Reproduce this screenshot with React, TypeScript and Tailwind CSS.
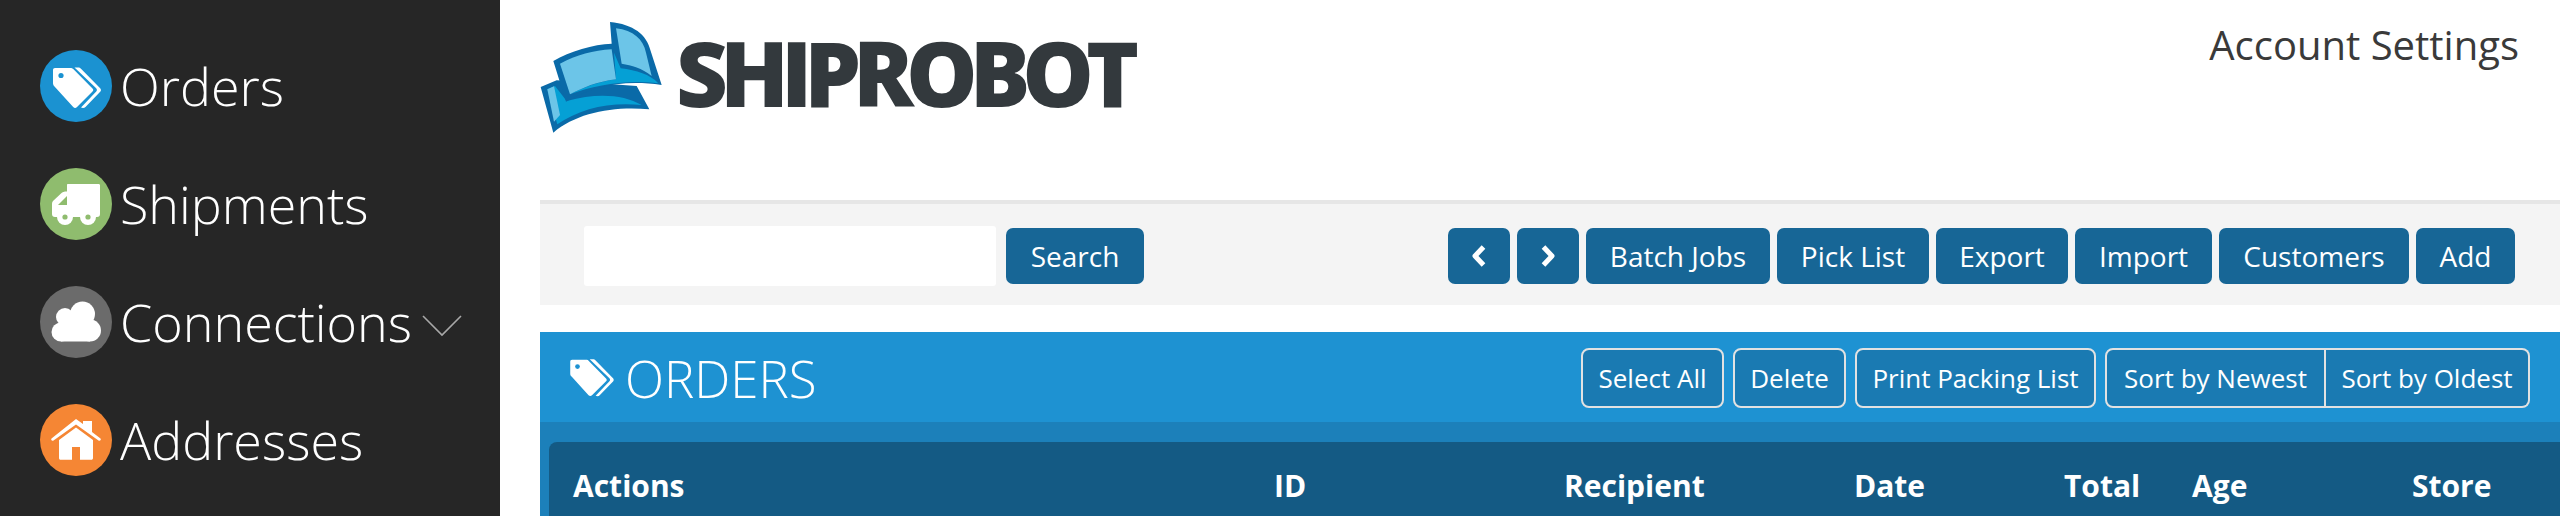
import React from 'react';

const font = { fontFamily: '"Open Sans", "Noto Sans", sans-serif' };

function TagIcon({ className, color }: { className: string; color: string }) {
  return (
    <svg className={className} viewBox="11 15 50 43" fill="none">
      <path
        d="M14 17H29C31 17 32 17.5 33 18.8L51.5 37.5C52.5 38.6 52.5 39.6 51.5 40.6L36 56C34.8 57.2 33.4 57.2 32.2 56L13.5 35.5C12.4 34.3 12 33.4 12 32V19C12 17.8 12.8 17 14 17Z"
        fill="#fff"
      />
      <circle cx="20" cy="24.5" r="2.6" fill={color} />
      <path
        d="M33.5 16.5H37C38.4 16.5 39.2 16.9 40 17.8L59.2 37.2C60.2 38.4 60.2 39.6 59.2 40.8L44.5 56C43.4 57.2 41.6 57.4 40 56.6L55 40.8C56.2 39.6 56.2 38.4 55.2 37.2Z"
        fill="#fff"
      />
    </svg>
  );
}

function TruckIcon() {
  return (
    <svg className="w-[72px] h-[72px]" viewBox="0 0 72 72">
      <path
        d="M28 16H58.5C59.6 16 60 16.6 60 17.6V46C60 48 59 49 57 49H15C13 49 12 48 12 46V36C12 34.5 12.5 33.5 13.5 32.5L21 25.5C22.5 24 24 23.5 27 23.5V17C27 16.4 27.4 16 28 16Z"
        fill="#fff"
      />
      <path d="M18 37L27 28V37Z" fill="#8fbc6e" />
      <circle cx="25" cy="49" r="8" fill="#fff" />
      <circle cx="48" cy="49" r="8" fill="#fff" />
      <circle cx="25" cy="49" r="2.6" fill="#8fbc6e" />
      <circle cx="48" cy="49" r="2.6" fill="#8fbc6e" />
    </svg>
  );
}

function CloudIcon() {
  return (
    <svg className="w-[72px] h-[72px]" viewBox="0 0 72 72" fill="#fff">
      <circle cx="42.5" cy="28" r="12.5" />
      <circle cx="25" cy="31" r="9" />
      <circle cx="21" cy="46" r="9.5" />
      <circle cx="50" cy="44.5" r="11" />
      <rect x="21" y="30" width="29" height="25.5" />
    </svg>
  );
}

function HouseIcon() {
  return (
    <svg className="w-[72px] h-[72px]" viewBox="0 0 72 72" fill="#fff">
      <path d="M36 15L43 20V17H52V28L60.5 34.5C61.5 35.6 60 37.5 58.5 36.5L36 20.5L13.5 36.5C12 37.5 10.5 35.6 11.5 34.5Z" />
      <path d="M36 23.5L53 36V54C53 55.2 52.4 55.8 51.2 55.8H40V43H32V55.8H20.8C19.6 55.8 19 55.2 19 54V36Z" />
    </svg>
  );
}

function Logo() {
  return (
    <svg className="w-[140px] h-[130px] shrink-0" viewBox="0 0 420 390">
      <path d="M32 228L80 208L320 225L358 295C250 285 140 305 70 365Z" fill="#0a6aa8" />
      <path d="M52 235L75 225L110 270C200 245 280 250 335 282C240 272 150 292 82 340Z" fill="#05a0d5" />
      <path d="M52 235L72 226L90 312L72 332Z" fill="#6cc5e8" />
      <path d="M70 150C120 120 190 100 245 98L240 33C310 40 350 70 362 120L395 222C280 205 190 225 108 272Z" fill="#0a6aa8" />
      <path d="M120 250C160 230 205 212 258 205L252 125L272 172C320 178 360 190 385 217C290 205 195 222 120 250Z" fill="#05a0d5" />
      <path d="M90 158C140 132 190 118 245 115L258 205C200 212 160 230 120 250Z" fill="#6cc5e8" />
      <path d="M258 52C310 58 340 85 348 125L365 195C335 170 305 163 275 158Z" fill="#6cc5e8" />
    </svg>
  );
}

function NavItem({ color, icon, label, caret }: { color: string; icon: React.ReactNode; label: string; caret?: boolean }) {
  return (
    <div className="flex items-center h-[72px]">
      <div className={`w-[72px] h-[72px] rounded-full shrink-0 ${color}`}>{icon}</div>
      <span className="ml-[8px] text-[52px] leading-[72px] font-light text-white">{label}</span>
      {caret && (
        <svg className="ml-[10px] mt-[8px] w-[40px] h-[24px]" viewBox="0 0 40 24" fill="none">
          <path d="M1 2L20 21L39 2" stroke="#a8a8a8" strokeWidth="1.6" />
        </svg>
      )}
    </div>
  );
}

function SolidButton({ children, className = '' }: { children: React.ReactNode; className?: string }) {
  return (
    <button className={`h-[56px] rounded-[7px] bg-[#176696] text-white text-[28px] flex items-center justify-center ${className}`}>
      {children}
    </button>
  );
}

function OutlineButton({ children, className = '' }: { children: React.ReactNode; className?: string }) {
  return (
    <button className={`h-[60px] border-2 border-[#e2e2e2] rounded-[8px] bg-[#1a7ab2] text-white text-[26px] flex items-center justify-center ${className}`}>
      {children}
    </button>
  );
}

function App() {
  return (
    <div className="flex w-[2560px] h-[516px] overflow-hidden bg-white" style={font}>
      <aside className="w-[500px] shrink-0 bg-[#262626] pl-[40px] pt-[50px] flex flex-col gap-[46px]">
        <NavItem color="bg-[#1b92d1]" icon={<div className="pl-[12px] pt-[16px]"><TagIcon className="w-[50px] h-[43px]" color="#1b92d1" /></div>} label="Orders" />
        <NavItem color="bg-[#8fbc6e]" icon={<TruckIcon />} label="Shipments" />
        <NavItem color="bg-[#6b6b6b]" icon={<CloudIcon />} label="Connections" caret />
        <NavItem color="bg-[#f58634]" icon={<HouseIcon />} label="Addresses" />
      </aside>

      <main className="flex-1 min-w-0 pl-[40px] flex flex-col">
        <header className="h-[200px] shrink-0 flex items-start justify-between">
          <div className="flex items-start pt-[11px] -ml-[10px]">
            <Logo />
            <span className="ml-[6px] mt-[13px] text-[90px] leading-[96px] font-extrabold text-[#33393d] tracking-[-8px]">SHIPROBOT</span>
          </div>
          <a className="mt-[23px] mr-[41px] text-[40px] leading-[44px] text-[#3a3a3a]">Account Settings</a>
        </header>

        <div className="h-[105px] shrink-0 border-t-4 border-[#e6e6e6] bg-[#f4f4f4] pt-[3px] pl-[44px] pr-[45px] flex items-center justify-between">
          <div className="flex items-center gap-[10px]">
            <input className="w-[412px] h-[60px] bg-white rounded-[3px] outline-none" />
            <SolidButton className="w-[138px]">Search</SolidButton>
          </div>
          <div className="flex items-center gap-[7px]">
            <SolidButton className="w-[62px]">
              <svg className="w-[16px] h-[22px]" viewBox="0 0 16 22" fill="none">
                <path d="M12.5 2L4 11L12.5 20" stroke="#fff" strokeWidth="5" strokeLinejoin="round" />
              </svg>
            </SolidButton>
            <SolidButton className="w-[62px]">
              <svg className="w-[16px] h-[22px]" viewBox="0 0 16 22" fill="none">
                <path d="M3.5 2L12 11L3.5 20" stroke="#fff" strokeWidth="5" strokeLinejoin="round" />
              </svg>
            </SolidButton>
            <SolidButton className="w-[184px]">Batch Jobs</SolidButton>
            <SolidButton className="w-[152px]">Pick List</SolidButton>
            <SolidButton className="w-[132px]">Export</SolidButton>
            <SolidButton className="w-[137px]">Import</SolidButton>
            <SolidButton className="w-[190px]">Customers</SolidButton>
            <SolidButton className="w-[99px]">Add</SolidButton>
          </div>
        </div>

        <section className="mt-[27px] flex-1 flex flex-col min-h-0">
          <div className="h-[90px] shrink-0 bg-[#1e92d2] pl-[29px] pr-[30px] flex items-center justify-between">
            <div className="flex items-center">
              <TagIcon className="w-[46px] h-[39px]" color="#1e92d2" />
              <span className="ml-[10px] mt-[1px] text-[51px] leading-[56px] font-light text-white">ORDERS</span>
            </div>
            <div className="flex items-center gap-[9px] mt-[2px]">
              <OutlineButton className="w-[143px]">Select All</OutlineButton>
              <OutlineButton className="w-[113px]">Delete</OutlineButton>
              <OutlineButton className="w-[241px]">Print Packing List</OutlineButton>
              <div className="flex">
                <OutlineButton className="w-[221px] rounded-r-none">Sort by Newest</OutlineButton>
                <OutlineButton className="w-[204px] rounded-l-none border-l-0">Sort by Oldest</OutlineButton>
              </div>
            </div>
          </div>
          <div className="flex-1 bg-[#1c80ba] pl-[9px] pt-[20px] min-h-0">
            <div className="h-full rounded-tl-[8px] bg-[#145a84] pl-[24px] pt-[12px] grid grid-cols-[701px_290px_290px_210px_128px_220px_1fr] items-center text-[30px] font-bold text-white">
              <span>Actions</span>
              <span>ID</span>
              <span>Recipient</span>
              <span>Date</span>
              <span>Total</span>
              <span>Age</span>
              <span>Store</span>
            </div>
          </div>
        </section>
      </main>
    </div>
  );
}

export default App;
